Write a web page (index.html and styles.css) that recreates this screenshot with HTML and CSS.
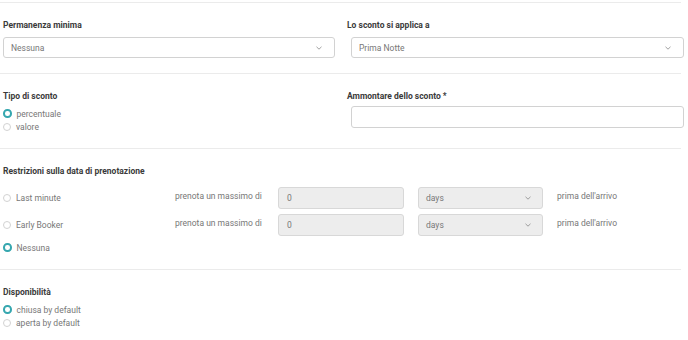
FILE: index.html
```html
<!DOCTYPE html>
<html lang="it">
<head>
    <meta charset="UTF-8">
    <title>Sconto</title>
    <link rel="stylesheet" href="styles.css">
</head>
<body>
<div class="form">

    <div class="section">
        <div class="cols">
            <div class="field">
                <div class="label">Permanenza minima</div>
                <div class="select">
                    <span>Nessuna</span>
                    <svg class="chev" width="6" height="4" viewBox="0 0 6 4"><path d="M0.5 0.8 L3 3.2 L5.5 0.8" fill="none" stroke="#888" stroke-width="0.8"/></svg>
                </div>
            </div>
            <div class="field right">
                <div class="label">Lo sconto si applica a</div>
                <div class="select">
                    <span>Prima Notte</span>
                    <svg class="chev" width="6" height="4" viewBox="0 0 6 4"><path d="M0.5 0.8 L3 3.2 L5.5 0.8" fill="none" stroke="#888" stroke-width="0.8"/></svg>
                </div>
            </div>
        </div>
    </div>

    <div class="section">
        <div class="cols">
            <div class="field">
                <div class="label">Tipo di sconto</div>
                <div class="radios">
                    <div class="opt"><span class="radio checked"></span>percentuale</div>
                    <div class="opt"><span class="radio"></span>valore</div>
                </div>
            </div>
            <div class="field right">
                <div class="label">Ammontare dello sconto *</div>
                <div class="input"></div>
            </div>
        </div>
    </div>

    <div class="section">
        <div class="label">Restrizioni sulla data di prenotazione</div>
        <div class="rows">
            <div class="row">
                <div class="opt wide"><span class="radio"></span>Last minute</div>
                <div class="hint">prenota un massimo di</div>
                <div class="input gray small">0</div>
                <div class="select gray small">
                    <span>days</span>
                    <svg class="chev" width="6" height="4" viewBox="0 0 6 4"><path d="M0.5 0.8 L3 3.2 L5.5 0.8" fill="none" stroke="#888" stroke-width="0.8"/></svg>
                </div>
                <div class="hint after">prima dell'arrivo</div>
            </div>
            <div class="row">
                <div class="opt wide"><span class="radio"></span>Early Booker</div>
                <div class="hint">prenota un massimo di</div>
                <div class="input gray small">0</div>
                <div class="select gray small">
                    <span>days</span>
                    <svg class="chev" width="6" height="4" viewBox="0 0 6 4"><path d="M0.5 0.8 L3 3.2 L5.5 0.8" fill="none" stroke="#888" stroke-width="0.8"/></svg>
                </div>
                <div class="hint after">prima dell'arrivo</div>
            </div>
            <div class="row">
                <div class="opt wide"><span class="radio checked"></span>Nessuna</div>
            </div>
        </div>
    </div>

    <div class="section">
        <div class="label">Disponibilità</div>
        <div class="radios">
            <div class="opt"><span class="radio checked"></span>chiusa by default</div>
            <div class="opt"><span class="radio"></span>aperta by default</div>
        </div>
    </div>

</div>
</body>
</html>
```

FILE: styles.css
```css
* {
    box-sizing: border-box;
    margin: 0;
    padding: 0;
}
body {
    font-family: Roboto, "Liberation Sans", sans-serif;
    font-size: 8.5px;
    color: #777;
    background: #fff;
    padding-top: 2px;
}
.form {
    width: 681px;
}
.section {
    border-top: 1px solid #ebebeb;
    padding: 16px 0 15px 3px;
}
.cols {
    display: grid;
    grid-template-columns: 332px 337px;
    column-gap: 12px;
}
.field.right .select,
.field.right .input {
    margin-left: 4px;
}
.label {
    font-weight: 700;
    color: #3a3a3a;
    line-height: 12px;
}
.select,
.input {
    height: 21px;
    border: 1px solid #d2d2d2;
    border-radius: 3px;
    background: #fff;
    display: flex;
    align-items: center;
    justify-content: space-between;
    padding: 0 12px 0 7px;
    color: #777;
}
.field .select {
    margin-top: 6px;
}
.field .input {
    margin-top: 4px;
    height: 22px;
}
.chev {
    display: block;
}
.radios {
    margin-top: 5px;
}
.opt {
    display: flex;
    align-items: center;
    height: 13px;
    color: #777;
}
.radio {
    width: 8px;
    height: 8px;
    border: 1px solid #d2d2d2;
    border-radius: 50%;
    margin-right: 5px;
    background: #fff;
}
.radio.checked {
    width: 8.5px;
    height: 8.5px;
    border: 2.6px solid #36a7af;
}
.rows {
    margin-top: 10px;
    display: flex;
    flex-direction: column;
    gap: 5px;
}
.row {
    display: flex;
    align-items: center;
}
.row .opt.wide {
    width: 172px;
}
.hint {
    width: 103px;
    align-self: flex-start;
    padding-top: 3px;
    line-height: 12px;
}
.hint.after {
    width: auto;
    margin-left: 14px;
}
.gray {
    background: #ededed;
    border-color: #d8d8d8;
}
.input.small {
    width: 126px;
    height: 22px;
    justify-content: flex-start;
    padding-left: 8px;
}
.select.small {
    width: 125px;
    height: 22px;
    margin-left: 14px;
    padding-right: 11px;
}
```
